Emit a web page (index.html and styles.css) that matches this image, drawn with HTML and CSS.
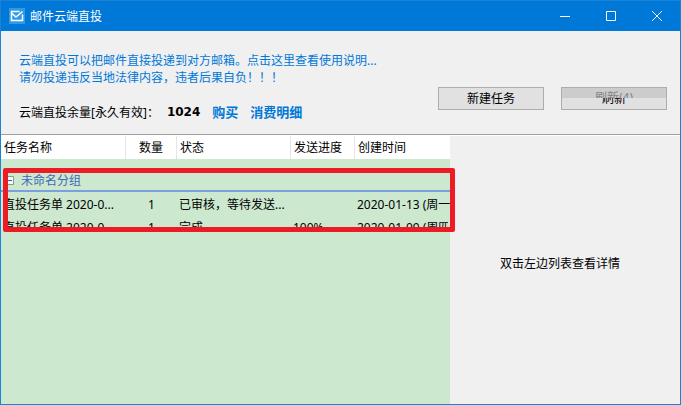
FILE: index.html
```html
<!DOCTYPE html>
<html lang="zh-CN">
<head>
<meta charset="utf-8">
<title>邮件云端直投</title>
<link rel="stylesheet" href="styles.css">
</head>
<body>
<div class="window">
  <header class="titlebar">
    <svg class="app-icon" viewBox="0 0 16 16" aria-hidden="true">
      <rect width="16" height="16" fill="#2f9be6"/>
      <path d="M10.500 3.500H2.500V12.500H13.500V6.500M3 5.500L7 9L13.500 3.500" fill="none" stroke="#fff" stroke-width="1.500"/>
    </svg>
    <h1 class="title">邮件云端直投</h1>
    <div class="controls">
      <button class="control" type="button" aria-label="最小化"><svg viewBox="0 0 10 10"><path d="M0 5.500H10"/></svg></button>
      <button class="control" type="button" aria-label="最大化"><svg viewBox="0 0 10 10"><path d="M.5 .5H9.500V9.500H.5Z"/></svg></button>
      <button class="control" type="button" aria-label="关闭"><svg viewBox="0 0 10 10"><path d="M0 0L10 10M10 0L0 10"/></svg></button>
    </div>
  </header>

  <section class="summary">
    <div class="info">
      <a class="notice" href="#help">云端直投可以把邮件直接投递到对方邮箱。点击这里查看使用说明...<br>请勿投递违反当地法律内容，违者后果自负！！！</a>
      <p class="balance">
        <span>云端直投余量[永久有效]：</span>
        <strong class="amount">1024</strong>
        <a class="link" href="#buy">购买</a>
        <a class="link" href="#detail">消费明细</a>
      </p>
    </div>
    <div class="actions">
      <button class="button" type="button">新建任务</button>
      <button class="button refresh" type="button">
        <span>刷新</span>
        <span class="countdown">刷新(4)</span>
      </button>
    </div>
  </section>

  <main class="content">
    <div class="list">
      <table class="tasks">
        <colgroup>
          <col class="col-name"><col class="col-count"><col class="col-state"><col class="col-progress"><col>
        </colgroup>
        <thead>
          <tr><th>任务名称</th><th class="count">数量</th><th>状态</th><th>发送进度</th><th>创建时间</th></tr>
        </thead>
        <tbody>
          <tr class="group"><td colspan="5"><div class="group-label"><svg class="toggle" viewBox="0 0 9 9" aria-hidden="true"><path d="M.5 .5H8.500V8.500H.5Z" fill="#f4f8f4" stroke="#8b988d"/><path d="M2 4.500H7" stroke="#3f5fb5"/></svg>未命名分组</div></td></tr>
          <tr class="task"><td>直投任务单 2020-0...</td><td class="count">1</td><td>已审核，等待发送...</td><td></td><td>2020-01-13 (周一)</td></tr>
          <tr class="task cut"><td><div>直投任务单 2020-0</div></td><td class="count"><div>1</div></td><td><div>完成</div></td><td><div>100%</div></td><td><div>2020-01-09 (周四)</div></td></tr>
        </tbody>
      </table>
      <div class="marker"></div>
    </div>
    <aside class="detail">双击左边列表查看详情</aside>
  </main>
</div>
</body>
</html>
```

FILE: styles.css
```css
* { box-sizing: border-box; }

body {
  margin: 0;
  font: 12px/17px "Noto Sans", "Noto Sans CJK SC", sans-serif;
  color: #000;
}

a { text-decoration: none; color: #0078d7; }

button { font: inherit; color: inherit; }

.window {
  display: flex;
  flex-direction: column;
  min-height: 100vh;
  border: 1px solid #1883d7;
  background: #f0f0f0;
}

.titlebar {
  display: flex;
  align-items: center;
  height: 30px;
  padding-left: 8px;
  background: #0078d7;
  color: #fff;
}

.app-icon { width: 16px; height: 16px; }

.title { margin: 0 0 0 5px; font-size: 12px; font-weight: 400; }

.controls { display: flex; align-self: stretch; margin-left: auto; }

.control {
  display: flex;
  align-items: center;
  justify-content: center;
  width: 46px;
  padding: 0;
  border: 0;
  background: none;
}

.control svg {
  width: 10px;
  height: 10px;
  fill: none;
  stroke: #fff;
  overflow: visible;
}

.summary {
  display: flex;
  justify-content: space-between;
  height: 104px;
  padding: 21px 13px 0 18px;
  border-bottom: 1px solid #a0a0a0;
}

.notice { display: block; }

.balance {
  display: flex;
  align-items: center;
  gap: 12px;
  margin: 18px 0 0;
}

.amount { font-family: "DejaVu Sans", sans-serif; margin-left: -4px; }

.link { font-size: 13px; font-weight: 700; }

.actions { display: flex; gap: 17px; padding-top: 35px; }

.button {
  width: 106px;
  height: 23px;
  padding: 0;
  border: 1px solid #adadad;
  background: #e1e1e1;
  line-height: 21px;
}

.refresh { position: relative; }

/* The disabled state is repainted over the upper half of the button. */
.countdown {
  position: absolute;
  top: 0;
  left: 0;
  right: 0;
  height: 10px;
  overflow: hidden;
  background: #ccc;
  color: #838383;
  line-height: 19px;
}

.content {
  flex: 1;
  display: grid;
  grid-template-columns: 449fr 230fr;
  border-top: 1px solid #fff;
}

.list { position: relative; min-width: 0; background: #cce8cf; }

.tasks {
  width: 100%;
  table-layout: fixed;
  border-collapse: separate;
  border-spacing: 0;
}

.col-name { width: 125px; }
.col-count { width: 51px; }
.col-state { width: 114px; }
.col-progress { width: 64px; }

th {
  height: 23px;
  padding: 0 3px;
  border-right: 1px solid #e5e5e5;
  background: #fff;
  font-weight: 400;
  text-align: left;
}

th:last-child { border-right: 0; }

td {
  padding: 0 2px;
  overflow: hidden;
  white-space: nowrap;
}

.count { text-align: center; }

.group td {
  height: 33px;
  padding: 11px 4px 0;
  border-bottom: 2px solid #7b9fe0;
  color: #3f68b5;
}

.group-label { display: flex; align-items: center; gap: 7px; }

.toggle { width: 9px; height: 9px; fill: none; }

.task td { height: 24px; }

.task.cut td { height: 16px; vertical-align: top; }

.cut div { height: 16px; overflow: hidden; line-height: 23px; }

.marker {
  position: absolute;
  top: 32px;
  left: 2px;
  right: -5px;
  height: 64px;
  border: 5px solid #ed1c24;
  border-radius: 2px;
}

.detail { padding-top: 119px; padding-left: 50px; }
```
